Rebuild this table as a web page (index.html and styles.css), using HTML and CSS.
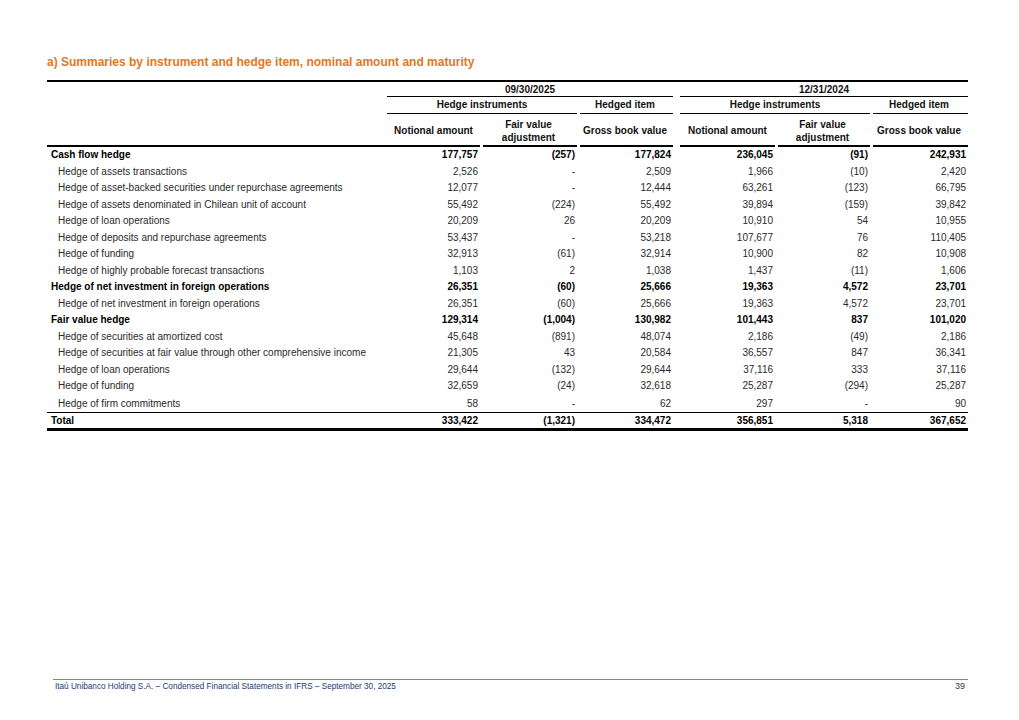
FILE: index.html
```html
<!DOCTYPE html>
<html lang="en">
<head>
<meta charset="utf-8">
<title>Summaries by instrument and hedge item</title>
<link rel="stylesheet" href="styles.css">
</head>
<body>
<div class="page">
  <main class="content">
    <h1 class="title">a) Summaries by instrument and hedge item, nominal amount and maturity</h1>
    <table class="tbl">
      <colgroup>
        <col class="c-label">
        <col class="c1"><col class="c2"><col class="c3">
        <col class="c4"><col class="c5"><col class="c6">
      </colgroup>
      <thead>
        <tr class="h1">
          <th class="lbl"></th>
          <th colspan="3" class="grp first">09/30/2025</th>
          <th colspan="3" class="grp wide">12/31/2024</th>
        </tr>
        <tr class="h2">
          <th class="lbl"></th>
          <th colspan="2" class="grp first">Hedge instruments</th>
          <th class="grp">Hedged item</th>
          <th colspan="2" class="grp wide">Hedge instruments</th>
          <th class="grp">Hedged item</th>
        </tr>
        <tr class="h3">
          <th class="lbl"></th>
          <th class="sub first">Notional amount</th>
          <th class="sub">Fair value<br>adjustment</th>
          <th class="sub">Gross book value</th>
          <th class="sub wide">Notional amount</th>
          <th class="sub">Fair value<br>adjustment</th>
          <th class="sub">Gross book value</th>
        </tr>
      </thead>
      <tbody>
        <tr class="grp-row"><td>Cash flow hedge</td><td>177,757</td><td>(257)</td><td>177,824</td><td>236,045</td><td>(91)</td><td>242,931</td></tr>
        <tr><td>Hedge of assets transactions</td><td>2,526</td><td>-</td><td>2,509</td><td>1,966</td><td>(10)</td><td>2,420</td></tr>
        <tr><td>Hedge of asset-backed securities under repurchase agreements</td><td>12,077</td><td>-</td><td>12,444</td><td>63,261</td><td>(123)</td><td>66,795</td></tr>
        <tr><td>Hedge of assets denominated in Chilean unit of account</td><td>55,492</td><td>(224)</td><td>55,492</td><td>39,894</td><td>(159)</td><td>39,842</td></tr>
        <tr><td>Hedge of loan operations</td><td>20,209</td><td>26</td><td>20,209</td><td>10,910</td><td>54</td><td>10,955</td></tr>
        <tr><td>Hedge of deposits and repurchase agreements</td><td>53,437</td><td>-</td><td>53,218</td><td>107,677</td><td>76</td><td>110,405</td></tr>
        <tr><td>Hedge of funding</td><td>32,913</td><td>(61)</td><td>32,914</td><td>10,900</td><td>82</td><td>10,908</td></tr>
        <tr><td>Hedge of highly probable forecast transactions</td><td>1,103</td><td>2</td><td>1,038</td><td>1,437</td><td>(11)</td><td>1,606</td></tr>
        <tr class="grp-row"><td>Hedge of net investment in foreign operations</td><td>26,351</td><td>(60)</td><td>25,666</td><td>19,363</td><td>4,572</td><td>23,701</td></tr>
        <tr><td>Hedge of net investment in foreign operations</td><td>26,351</td><td>(60)</td><td>25,666</td><td>19,363</td><td>4,572</td><td>23,701</td></tr>
        <tr class="grp-row"><td>Fair value hedge</td><td>129,314</td><td>(1,004)</td><td>130,982</td><td>101,443</td><td>837</td><td>101,020</td></tr>
        <tr><td>Hedge of securities at amortized cost</td><td>45,648</td><td>(891)</td><td>48,074</td><td>2,186</td><td>(49)</td><td>2,186</td></tr>
        <tr><td>Hedge of securities at fair value through other comprehensive income</td><td>21,305</td><td>43</td><td>20,584</td><td>36,557</td><td>847</td><td>36,341</td></tr>
        <tr><td>Hedge of loan operations</td><td>29,644</td><td>(132)</td><td>29,644</td><td>37,116</td><td>333</td><td>37,116</td></tr>
        <tr><td>Hedge of funding</td><td>32,659</td><td>(24)</td><td>32,618</td><td>25,287</td><td>(294)</td><td>25,287</td></tr>
        <tr class="last"><td>Hedge of firm commitments</td><td>58</td><td>-</td><td>62</td><td>297</td><td>-</td><td>90</td></tr>
        <tr class="total"><td>Total</td><td>333,422</td><td>(1,321)</td><td>334,472</td><td>356,851</td><td>5,318</td><td>367,652</td></tr>
      </tbody>
    </table>
  </main>
  <footer class="footer">
    <span class="foot-text">Itaú Unibanco Holding S.A. – Condensed Financial Statements in IFRS – September 30, 2025</span>
    <span class="foot-page">39</span>
  </footer>
</div>
</body>
</html>
```

FILE: styles.css
```css
html, body {
  margin: 0;
  padding: 0;
  background: #ffffff;
}

body {
  font-family: "Liberation Sans", Arial, sans-serif;
  color: #222;
}

.page {
  width: 1019px;
  height: 720px;
  display: flex;
  flex-direction: column;
  box-sizing: border-box;
}

.content {
  padding: 55px 0 0 47px;
}

.title {
  margin: 0 0 11px 0;
  font-size: 12px;
  line-height: 14px;
  font-weight: bold;
  color: #e2771f;
}

.tbl {
  width: 921px;
  border-collapse: separate;
  border-spacing: 0;
  table-layout: fixed;
  font-size: 10px;
}

.c-label { width: 340px; }
.c1 { width: 93px; }
.c2 { width: 97px; }
.c3 { width: 96px; }
.c4 { width: 102px; }
.c5 { width: 95px; }
.c6 { width: 98px; }

.tbl th,
.tbl td {
  padding: 0;
  white-space: nowrap;
}

/* header */
.tbl thead th {
  font-weight: bold;
  color: #111;
  text-align: center;
  background-repeat: no-repeat;
  background-position: right bottom;
}

.h1 th {
  height: 15px;
  line-height: 15px;
  border-top: 2px solid #000;
  vertical-align: top;
}

.h1 .grp,
.h2 .grp {
  background-image: linear-gradient(#000, #000);
  background-size: calc(100% - 3px) 1px;
}

.h1 .grp.first,
.h2 .grp.first {
  background-size: 100% 1px;
}

.h1 .grp.wide,
.h2 .grp.wide,
.h3 .sub.wide {
  background-size: calc(100% - 7px) 1px;
  padding-left: 7px;
}

.h2 th {
  height: 17px;
  line-height: 16px;
  vertical-align: top;
}

.h3 th {
  height: 31px;
  line-height: 13px;
  vertical-align: middle;
}

.h3 .sub {
  background-image: linear-gradient(#000, #000);
  background-size: calc(100% - 3px) 2px;
}

.h3 .sub.first {
  background-size: 100% 2px;
}

.h3 .sub.wide {
  background-size: calc(100% - 7px) 2px;
}

.h3 .lbl {
  border-bottom: 2px solid #000;
}

/* body */
.tbl tbody td {
  height: 16.5px;
  line-height: 16.5px;
  text-align: right;
  padding-right: 2px;
  color: #2a2a2a;
}

.tbl tbody td:first-child {
  text-align: left;
  padding-left: 11px;
  padding-right: 0;
}

.tbl tbody tr.grp-row td,
.tbl tbody tr.total td {
  font-weight: bold;
  color: #000;
}

.tbl tbody tr.grp-row td:first-child,
.tbl tbody tr.total td:first-child {
  padding-left: 4px;
}

.tbl tbody tr.last td {
  height: 17px;
  line-height: 17px;
}

.tbl tbody tr.total td {
  border-top: 1px solid #000;
  border-bottom: 3px solid #000;
  height: 15px;
  line-height: 15px;
}

/* footer */
.footer {
  margin: auto 51px 28px 53px;
  border-top: 1px solid #7488ad;
  display: flex;
  justify-content: space-between;
  align-items: flex-start;
  padding: 1px 3px 0 2px;
  font-size: 8.2px;
  line-height: 11px;
  color: #1a3a72;
}

.foot-page {
  font-size: 9px;
  color: #2b3b5a;
}
```
